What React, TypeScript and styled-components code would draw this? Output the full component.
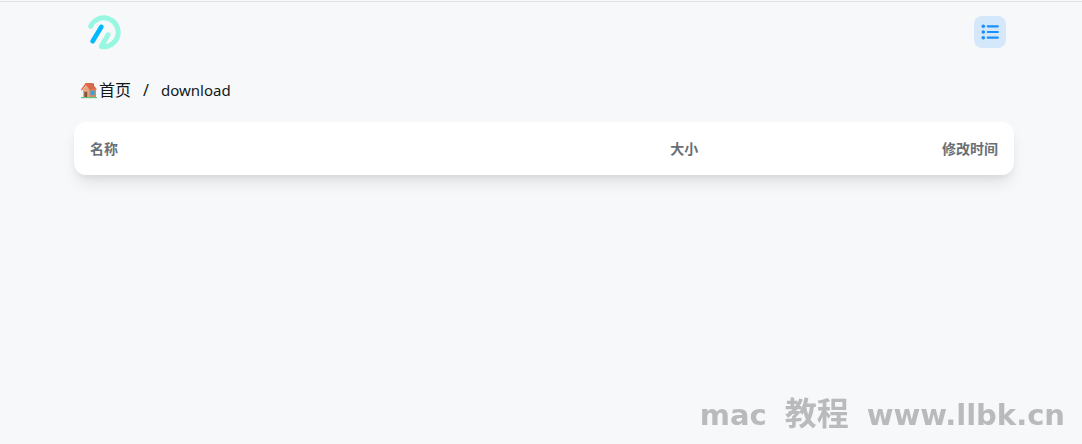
import React from "react";
import styled, { createGlobalStyle } from "styled-components";

const GlobalStyle = createGlobalStyle`
  * { box-sizing: border-box; }
  body {
    margin: 0;
    background: #f7f8fa;
    color: #11181c;
    font-family: "Noto Sans", "Noto Sans CJK SC", sans-serif;
    font-size: 16px;
  }
`;

const Page = styled.div`
  min-height: 100vh;
  border-top: 1px solid #f7f8fa;
  padding: 0 68px 0 74px;
`;

const TopLine = styled.div`
  height: 1px;
  margin: 0 -68px 0 -74px;
  background: #dfe3e6;
`;

const Header = styled.header`
  display: flex;
  align-items: center;
  justify-content: space-between;
  height: 60px;
  padding: 0 8px 0 12px;
`;

const LogoLink = styled.a`
  display: flex;
`;

const LayoutButton = styled.button`
  display: flex;
  align-items: center;
  justify-content: center;
  width: 32px;
  height: 32px;
  padding: 0;
  border: 0;
  border-radius: 8px;
  background: #d5e8fb;
  color: #1890ff;
  cursor: pointer;
`;

const Breadcrumb = styled.nav`
  display: flex;
  align-items: center;
  height: 24px;
  margin: 16px 0 20px;
  padding: 0 5px;
  line-height: 24px;
`;

const Crumb = styled.a`
  display: flex;
  align-items: center;
  gap: 1px;
  color: inherit;
  text-decoration: none;
`;

const Latin = styled.span`
  font-size: 15px;
`;

const Separator = styled.span`
  margin: 0 12px;
`;

const Card = styled.main`
  padding: 16px;
  border-radius: 12px;
  background: #fff;
  box-shadow: 0 10px 15px -3px rgba(0, 0, 0, 0.1), 0 4px 6px -2px rgba(0, 0, 0, 0.05);
`;

const FileTable = styled.table`
  width: 100%;
  table-layout: fixed;
  border-collapse: collapse;
`;

const HeadCell = styled.th<{ $width: string; $align: "left" | "right" }>`
  width: ${(p) => p.$width};
  height: 21px;
  padding: 0;
  color: #687076;
  font-size: 14px;
  font-weight: 700;
  line-height: 21px;
  text-align: ${(p) => p.$align};
`;

const Watermark = styled.div`
  position: fixed;
  right: 17px;
  bottom: 9px;
  display: flex;
  align-items: baseline;
  gap: 18px;
  color: #b9babb;
  font-family: "DejaVu Sans", "Noto Sans CJK SC", sans-serif;
  font-size: 29px;
  font-weight: 700;
  line-height: 40px;
  white-space: nowrap;
  pointer-events: none;
`;

const WatermarkHan = styled.span`
  font-family: "Noto Sans CJK SC", sans-serif;
  font-size: 32px;
`;

const Logo = () => (
  <svg width="36" height="36" viewBox="0 0 36 36" fill="none" strokeWidth="5" strokeLinecap="round" strokeLinejoin="round" aria-label="Logo">
    <path d="M4.7 12.3A14.4 14.4 0 1 1 15.4 32.5L22 20.8" stroke="#98f7e0" />
    <path d="M6.6 27.2L15.4 12.8" stroke="#00b8ff" strokeWidth="4.6" />
  </svg>
);

const ListIcon = () => (
  <svg width="20" height="20" viewBox="0 0 20 20" aria-hidden="true">
    {[4.3, 10, 15.7].map((y) => (
      <g key={y}>
        <circle cx="3.3" cy={y} r="1.8" fill="currentColor" />
        <path d={`M7.8 ${y}H17.8`} stroke="currentColor" strokeWidth="2.2" strokeLinecap="round" />
      </g>
    ))}
  </svg>
);

const House = () => (
  <svg width="19" height="18" viewBox="0 0 19 18" aria-hidden="true">
    <path d="M13 2.4h2v3.4h-2z" fill="#a8523c" />
    <path d="M4 9L7 4.5 11 9v7.3H4z" fill="#e0a884" />
    <path d="M7 4h5.5l4.5 5v7.3h-6.5V8.5z" fill="#c98b68" />
    <path d="M7 2h6l5 6.6h-6.8z" fill="#d9694c" />
    <path d="M2.4 9.2L7 2.8l4.4 6" fill="none" stroke="#e8623f" strokeWidth="1.4" />
    <path d="M5.4 10.8h2.8v5.5H5.4z" fill="#85513d" />
    <path d="M11.6 9.8h3.8v4.2h-3.8z" fill="#2ca5e8" />
    <path d="M2 16h16v1.2H2z" fill="#5fc879" />
  </svg>
);

export default function App() {
  return (
    <>
      <GlobalStyle />
      <Page>
        <TopLine />
        <Header>
          <LogoLink href="#" aria-label="Home">
            <Logo />
          </LogoLink>
          <LayoutButton type="button" aria-label="List view">
            <ListIcon />
          </LayoutButton>
        </Header>
        <Breadcrumb aria-label="Breadcrumb">
          <Crumb href="#">
            <House />
            <span>首页</span>
          </Crumb>
          <Separator>/</Separator>
          <Crumb href="#download">
            <Latin>download</Latin>
          </Crumb>
        </Breadcrumb>
        <Card>
          <FileTable>
            <thead>
              <tr>
                <HeadCell $width="50%" $align="left">名称</HeadCell>
                <HeadCell $width="17%" $align="right">大小</HeadCell>
                <HeadCell $width="33%" $align="right">修改时间</HeadCell>
              </tr>
            </thead>
          </FileTable>
        </Card>
      </Page>
      <Watermark>
        <span>mac</span>
        <WatermarkHan>教程</WatermarkHan>
        <span>www.llbk.cn</span>
      </Watermark>
    </>
  );
}
